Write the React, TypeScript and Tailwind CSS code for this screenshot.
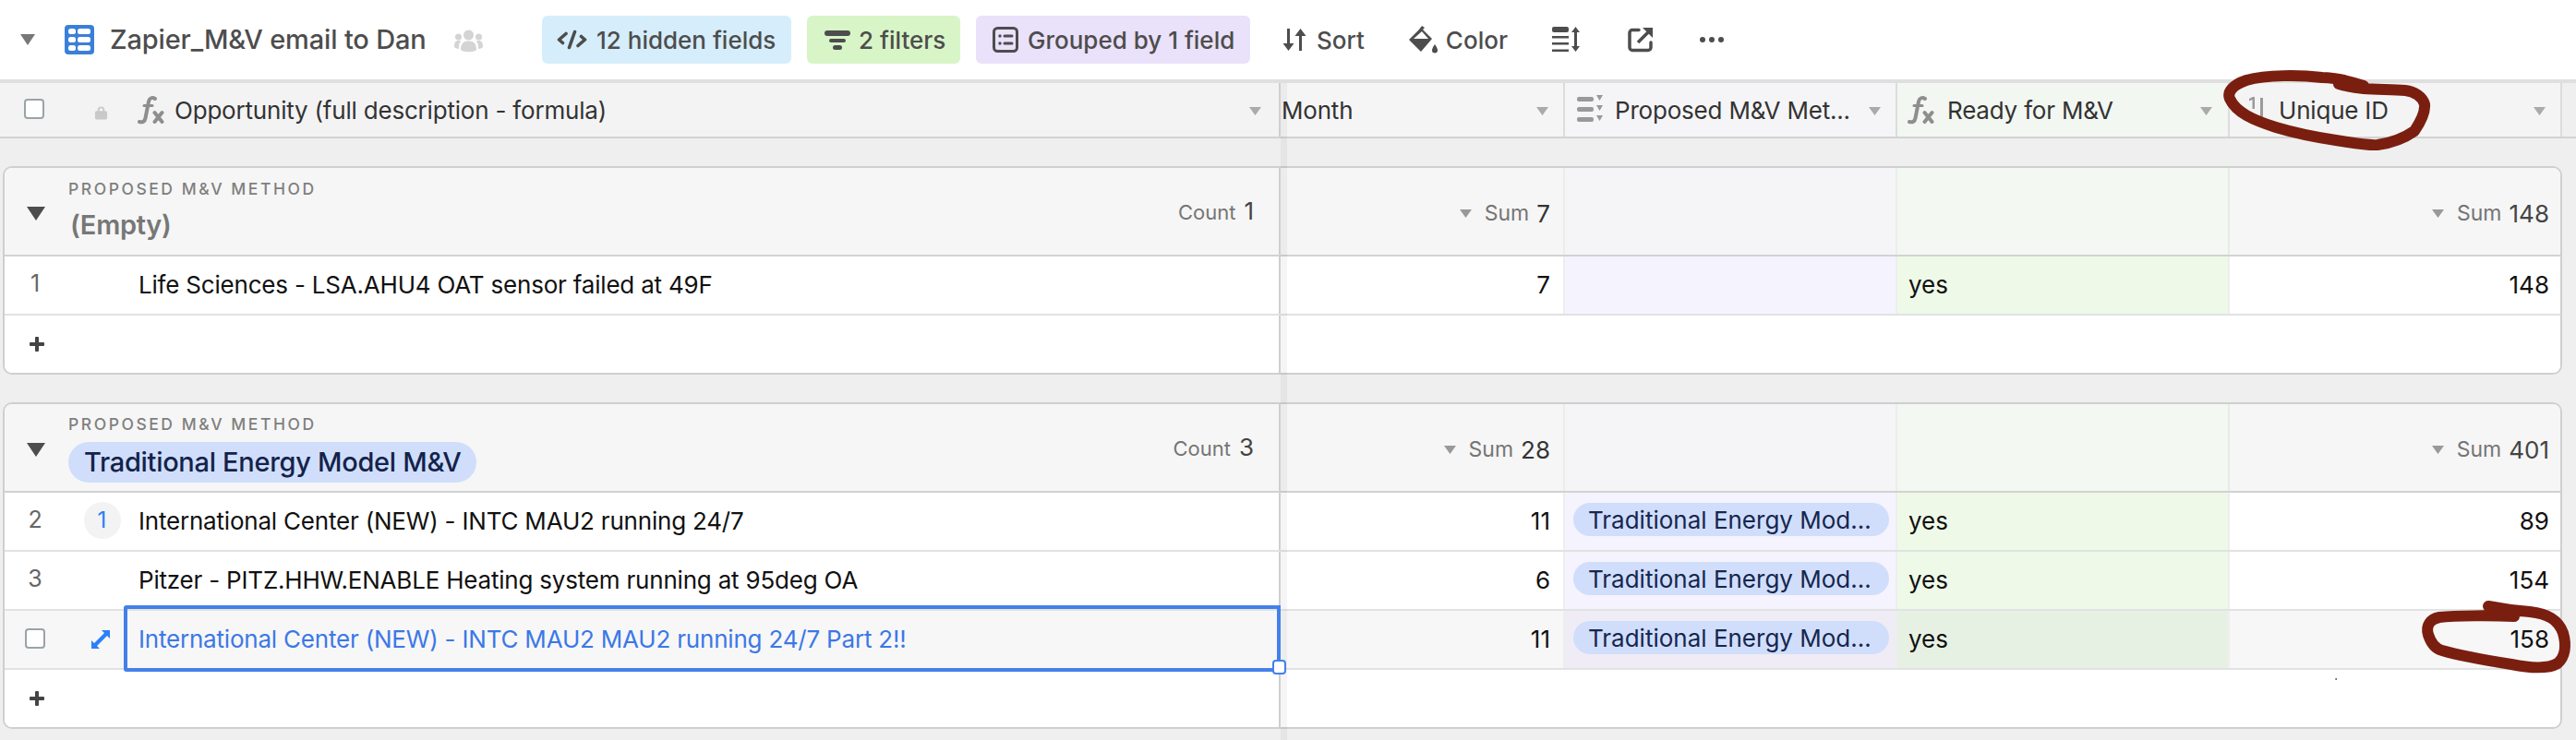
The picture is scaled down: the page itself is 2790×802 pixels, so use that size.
import React from "react";

const FONT = "[font-family:Inter,'Liberation_Sans',sans-serif]";

function Chev({ className = "" }: { className?: string }) {
  return (
    <svg width="13" height="9" viewBox="0 0 13 9" className={className}>
      <path d="M0 0h13L6.500 9z" fill="currentColor" />
    </svg>
  );
}

function Fx({ className = "" }: { className?: string }) {
  return (
    <svg width="29" height="32" viewBox="0 0 29 32" className={className}>
      <path d="M19 4c-3-2-6-1-7 3l-3.500 18c-.7 3.500-3 5-6.500 4" fill="none" stroke="currentColor" strokeWidth="4" strokeLinecap="round" />
      <path d="M7 11.500h9" stroke="currentColor" strokeWidth="3" strokeLinecap="round" />
      <path d="M18.500 19l8 10M26.500 19l-8 10" stroke="currentColor" strokeWidth="4" strokeLinecap="round" />
    </svg>
  );
}

function HeaderCell({ w, bg, icon, label, chevLeft }: { w: string; bg: string; icon?: React.ReactNode; label: string; chevLeft: string }) {
  return (
    <div className={`${w} ${bg} h-full relative flex items-center border-r-2 border-[#dcdcdc] shrink-0`}>
      {icon}
      <span className="text-[26px] tracking-[-0.2px] text-[#333] whitespace-nowrap">{label}</span>
      <Chev className={`absolute ${chevLeft} top-[26px] text-[#aaaaaa]`} />
    </div>
  );
}

function Toolbar() {
  return (
    <div className="h-[86px] bg-white flex items-center shrink-0 text-[#4d4d4d]">
      <svg width="16" height="12" viewBox="0 0 16 12" className="ml-[22px] text-[#777]"><path d="M0 0h16L8 12z" fill="currentColor" /></svg>
      <svg width="32" height="32" viewBox="0 0 32 32" className="ml-[32px]">
        <rect width="32" height="32" rx="4" fill="#3b80d8" />
        <g fill="#fff">
          <rect x="4" y="4" width="8" height="6" rx="2.500" /><rect x="14" y="4" width="14" height="6" rx="2.500" />
          <rect x="4" y="13" width="8" height="6" rx="2.500" /><rect x="14" y="13" width="14" height="6" rx="2.500" />
          <rect x="4" y="22" width="8" height="6" rx="2.500" /><rect x="14" y="22" width="14" height="6" rx="2.500" />
        </g>
      </svg>
      <span className="ml-[17px] text-[29px] tracking-[-0.15px] font-medium whitespace-nowrap w-[343px]">Zapier_M&amp;V email to Dan</span>
      <svg width="31" height="25" viewBox="0 0 31 25" className="ml-[30px] mt-[2px]" fill="#d4d4d4">
        <circle cx="15.500" cy="6" r="5.500" /><circle cx="4.500" cy="8" r="3.500" /><circle cx="26.500" cy="8" r="3.500" />
        <path d="M7 22c0-7 3-9.500 8.500-9.500S24 15 24 22c-3 3-14 3-17 0z" /><path d="M0 19c0-5 1-7 5-7 1 0 2 0 2 1-2 2-2 4-2 8-2 0-4-1-5-2zM31 19c0-5-1-7-5-7-1 0-2 0-2 1 2 2 2 4 2 8 2 0 4-1 5-2z" />
      </svg>
      <div className="ml-[64px] w-[270px] h-[52px] rounded-[6px] bg-[#d6eefb] flex items-center pl-[16px] text-[26px] font-medium whitespace-nowrap">
        <svg width="33" height="22" viewBox="0 0 33 22" className="mr-[10px]" fill="none" stroke="#4d4d4d" strokeWidth="3.600" strokeLinecap="round" strokeLinejoin="round">
          <path d="M10 4.500l-7.500 6.500 4 3.500M23 17.500l7.500-6.500-4-3.500M19.500 2.500L13.500 19.500" />
        </svg>
        12 hidden fields
      </div>
      <div className="ml-[17px] w-[166px] h-[52px] rounded-[6px] bg-[#d8f5c8] flex items-center pl-[19px] text-[26px] font-medium whitespace-nowrap">
        <svg width="28" height="21" viewBox="0 0 28 21" className="mr-[9px]" fill="#4d4d4d">
          <rect x="0" y="0" width="28" height="6" rx="3" /><rect x="5" y="9" width="18" height="4" rx="2" /><rect x="9" y="16" width="10" height="5" rx="2.500" />
        </svg>
        2 filters
      </div>
      <div className="ml-[17px] w-[297px] h-[52px] rounded-[6px] bg-[#eae1fa] flex items-center pl-[18px] text-[26px] font-medium whitespace-nowrap">
        <svg width="28" height="28" viewBox="0 0 28 28" className="mr-[10px]" fill="none" stroke="#4d4d4d">
          <rect x="1.500" y="1.500" width="25" height="25" rx="4" strokeWidth="3" />
          <circle cx="8" cy="10" r="1.700" fill="#4d4d4d" stroke="none" /><circle cx="8" cy="18" r="1.700" fill="#4d4d4d" stroke="none" />
          <path d="M13 10h8M13 18h8" strokeWidth="3" strokeLinecap="round" />
        </svg>
        Grouped by 1 field
      </div>
      <svg width="26" height="26" viewBox="0 0 26 26" className="ml-[35px]" fill="#4d4d4d">
        <path d="M5 1h3v16h4.500L6.500 25 .5 17H5zM18 9h-4.500l6-8 6 8H21v16h-3z" />
      </svg>
      <span className="ml-[11px] text-[26px] font-medium">Sort</span>
      <svg width="32" height="30" viewBox="0 0 32 30" className="ml-[47px]" fill="#4d4d4d">
        <path d="M15 0l3 2-2 2 10 10-12 14L1 15l11-11zM6 14h16l-7-8z" fillRule="evenodd" />
        <path d="M29 20c2 3 3 5 3 6.500a3 3 0 0 1-6 0c0-1.500 1-3.500 3-6.500z" />
      </svg>
      <span className="ml-[9px] text-[26px] font-medium">Color</span>
      <svg width="30" height="28" viewBox="0 0 30 28" className="ml-[48px]" fill="#4d4d4d">
        <rect x="0" y="0" width="18" height="6" rx="2" /><rect x="0" y="10" width="18" height="2.500" /><rect x="0" y="17" width="18" height="2.500" /><rect x="0" y="24.500" width="18" height="2.500" />
        <path d="M25.500 0l4.500 6h-3v15h3l-4.500 6-4.500-6h3V6h-3z" />
      </svg>
      <svg width="28" height="28" viewBox="0 0 28 28" className="ml-[52px]" fill="none" stroke="#4d4d4d" strokeWidth="3.500">
        <path d="M12 3.500H5a3 3 0 0 0-3 3v16a3 3 0 0 0 3 3h17a3 3 0 0 0 3-3V17" strokeLinecap="round" />
        <path d="M11 17L22 6" />
        <path d="M16 1h11v11z" fill="#4d4d4d" stroke="none" />
      </svg>
      <svg width="26" height="6" viewBox="0 0 26 6" className="ml-[50px]" fill="#4d4d4d">
        <circle cx="3" cy="3" r="3" /><circle cx="13" cy="3" r="3" /><circle cx="23" cy="3" r="3" />
      </svg>
    </div>
  );
}

function ColumnHeader() {
  return (
    <div className="h-[64px] shrink-0 border-t-4 border-b-2 border-t-[#dfdfdf] border-b-[#d2d2d2] flex">
      <div className="w-[1387px] h-full shrink-0 bg-[#f3f3f3] border-r-2 border-[#cfcfcf] relative flex items-center">
        <div className="ml-[26px] w-[22px] h-[22px] rounded-[4px] border-2 border-[#9aa3a8] bg-white mb-[2px]" />
        <svg width="15" height="16" viewBox="0 0 16 16" className="ml-[54px] mt-[6px]" fill="#c9c9c9">
          <rect x="1" y="6" width="14" height="10" rx="2" /><path d="M4 7V5a4 4 0 0 1 8 0v2h-2V5a2 2 0 0 0-4 0v2z" />
        </svg>
        <Fx className="ml-[32px] text-[#8e8e8e] shrink-0" />
        <span className="ml-[11px] text-[26px] tracking-[-0.2px] text-[#333] whitespace-nowrap">Opportunity (full description - formula)</span>
        <Chev className="absolute left-[1353px] top-[26px] text-[#aaaaaa]" />
      </div>
      <HeaderCell w="w-[308px]" bg="bg-[#f5f5f6]" label="Month" chevLeft="left-[277px]" icon={<span className="w-[1px]" />} />
      <HeaderCell
        w="w-[360px]"
        bg="bg-[#f5f5f7]"
        label="Proposed M&V Met..."
        chevLeft="left-[329px]"
        icon={
          <svg width="28" height="34" viewBox="0 0 28 34" className="ml-[13px] mr-[13px] shrink-0" fill="#999">
            <rect x="0" y="3" width="18" height="5" rx="2" /><rect x="0" y="14" width="18" height="5" rx="2" /><rect x="0" y="25" width="18" height="5" rx="2" />
            <path d="M21 1h7l-3.500 6zM21 12h7l-3.500 6zM21 23h7l-3.500 6z" />
          </svg>
        }
      />
      <HeaderCell
        w="w-[360px]"
        bg="bg-[#f2f7f1]"
        label="Ready for M&V"
        chevLeft="left-[328px]"
        icon={<Fx className="ml-[11px] mr-[14px] text-[#8e8e8e] shrink-0" />}
      />
      <HeaderCell
        w="w-[360px]"
        bg="bg-[#f4f4f4]"
        label="Unique ID"
        chevLeft="left-[329px]"
        icon={
          <svg width="20" height="32" viewBox="0 0 20 32" className="ml-[18px] mr-[15px] shrink-0" fill="#9a9a9a">
            <path d="M3 4l4-2h2v13H6.500V5L3 6.500z" /><rect x="3" y="22" width="7" height="6" rx="1" /><rect x="15" y="3" width="3" height="28" />
          </svg>
        }
      />
    </div>
  );
}

type Row = { n: number; title: string; month: number; method?: boolean; uid: number; badge?: boolean; selected?: boolean };

function DataRow({ r }: { r: Row }) {
  const s = r.selected;
  return (
    <div className={`h-[64px] flex border-b-2 border-[#e0e2e3] ${s ? "bg-[#f7f7f7]" : "bg-white"}`}>
      <div className="w-[1380px] shrink-0 flex items-center relative bg-inherit">
        <div className="w-[62px] shrink-0 flex justify-center pl-[4px] mb-[2px]">
          {s ? <div className="w-[22px] h-[22px] rounded-[4px] border-2 border-[#9aa3a8] bg-white" /> : <span className="text-[25px] text-[#666]">{r.n}</span>}
        </div>
        <div className="w-[83px] shrink-0 flex justify-center pl-[4px]">
          {r.badge && <div className="w-[40px] h-[40px] rounded-full bg-[#f3f3f3] flex items-center justify-center text-[24px] text-[#2d7ff9] mb-[2px]">1</div>}
          {s && (
            <svg width="20" height="20" viewBox="0 0 20 20" className="ml-[-3px]" fill="#2d7ff9">
              <path d="M20 0v9l-3-3L6 17l3 3H0v-9l3 3L14 3l-3-3z" />
            </svg>
          )}
        </div>
        <span className={`text-[26px] tracking-[-0.2px] whitespace-nowrap mb-[2px] ${s ? "text-[#3b78e7]" : "text-[#111]"}`}>{r.title}</span>
        {s && (
          <div className="absolute left-[129px] right-[-2px] top-[-6px] bottom-[-4px] border-[4px] border-[#4480ea] rounded-l-[3px] z-10 pointer-events-none">
            <div className="absolute right-[-10px] bottom-[-7px] w-[15px] h-[16px] rounded-[4px] border-2 border-[#4480ea] bg-white" />
          </div>
        )}
      </div>
      <div className="w-[2px] shrink-0 bg-[#cfcfcf]" />
      <div className="w-[308px] shrink-0 flex items-center justify-end pr-[14px] text-[26px] text-[#111] border-r-2 border-[#eeeeee] pb-[2px]">{r.month}</div>
      <div className={`w-[360px] shrink-0 flex items-center pl-[9px] border-r-2 border-[#eeeeee] ${s ? "bg-[#efecf6]" : "bg-[#f5f3fd]"}`}>
        {r.method && (
          <div className="w-[342px] h-[36px] rounded-[18px] bg-[#d0defc] flex items-center pl-[16px] text-[26px] text-[#17264d] whitespace-nowrap mb-[4px]">
            Traditional Energy Mod...
          </div>
        )}
      </div>
      <div className={`w-[360px] shrink-0 flex items-center pl-[12px] pb-[2px] text-[26px] text-[#111] border-r-2 border-[#eeeeee] ${s ? "bg-[#e7f1e3]" : "bg-[#eef9e8]"}`}>yes</div>
      <div className="flex-1 flex items-center justify-end pr-[12px] pb-[2px] text-[26px] text-[#111]">{r.uid}</div>
    </div>
  );
}

function Group({ count, month, uid, rows, pill }: { count: number; month: number; uid: number; rows: Row[]; pill?: string }) {
  return (
    <div className="ml-[3px] w-[2772px] rounded-[10px] border-2 border-[#cfcfcf] bg-white overflow-visible">
      <div className="h-[96px] flex border-b-2 border-[#d2d2d2] bg-[#f6f6f6] rounded-t-[8px]">
        <div className="w-[1380px] shrink-0 flex items-center relative">
          <svg width="20" height="15" viewBox="0 0 20 15" className="ml-[24px] mt-[4px] shrink-0"><path d="M0 0h20L10 15z" fill="#4d4d4d" /></svg>
          <div className="ml-[25px] flex flex-col items-start">
            <span className="text-[17.500px] font-medium tracking-[2.550px] text-[#7f7f7f] leading-[24px] whitespace-nowrap">PROPOSED M&amp;V METHOD</span>
            {pill ? (
              <span className="mt-[7px] h-[44px] rounded-[22px] bg-[#d0defc] px-[17px] flex items-center text-[29px] tracking-[-0.3px] font-medium text-[#13234a] whitespace-nowrap">{pill}</span>
            ) : (
              <span className="mt-[5px] ml-[2px] h-[44px] flex items-center text-[29px] font-semibold tracking-[-0.3px] text-[#777] whitespace-nowrap">(Empty)</span>
            )}
          </div>
          <div className="absolute right-[27px] top-[27px] flex items-baseline gap-[9px]">
            <span className="text-[22px] text-[#757575]">Count</span>
            <span className="text-[26px] text-[#444]">{count}</span>
          </div>
        </div>
        <div className="w-[2px] shrink-0 bg-[#cfcfcf]" />
        <div className="w-[308px] shrink-0 flex items-center justify-end pr-[14px] border-r-2 border-[#ececec] pt-[4px]">
          <Chev className="text-[#999] mr-[14px]" />
          <span className="text-[23px] text-[#757575] mr-[8px]">Sum</span>
          <span className="text-[26px] text-[#333]">{month}</span>
        </div>
        <div className="w-[360px] shrink-0 bg-[#f5f5f7] border-r-2 border-[#ececec]" />
        <div className="w-[360px] shrink-0 bg-[#f3f8f2] border-r-2 border-[#e6ebe5]" />
        <div className="flex-1 flex items-center justify-end pr-[12px] pt-[4px]">
          <Chev className="text-[#999] mr-[14px]" />
          <span className="text-[23px] text-[#757575] mr-[8px]">Sum</span>
          <span className="text-[26px] text-[#444]">{uid}</span>
        </div>
      </div>
      {rows.map((r) => (
        <DataRow key={r.n} r={r} />
      ))}
      <div className="h-[62px] flex rounded-b-[8px] bg-white">
        <div className="w-[1380px] shrink-0 flex items-center">
          <svg width="16" height="16" viewBox="0 0 16 16" className="ml-[27px]" fill="#444">
            <rect x="6" y="0" width="4" height="16" rx="1" /><rect x="0" y="6" width="16" height="4" rx="1" />
          </svg>
        </div>
        <div className="w-[2px] shrink-0 bg-[#cfcfcf]" />
      </div>
    </div>
  );
}

export default function App() {
  return (
    <div className={`${FONT} w-[2790px] h-[802px] bg-[#efefef] relative overflow-hidden flex flex-col`}>
      <Toolbar />
      <ColumnHeader />
      <div className="mt-[30px] flex flex-col gap-[30px]">
        <Group
          count={1}
          month={7}
          uid={148}
          rows={[{ n: 1, title: "Life Sciences - LSA.AHU4 OAT sensor failed at 49F", month: 7, uid: 148 }]}
        />
        <Group
          count={3}
          month={28}
          uid={401}
          pill="Traditional Energy Model M&V"
          rows={[
            { n: 2, title: "International Center (NEW) - INTC MAU2 running 24/7", month: 11, method: true, uid: 89, badge: true },
            { n: 3, title: "Pitzer - PITZ.HHW.ENABLE Heating system running at 95deg OA", month: 6, method: true, uid: 154 },
            { n: 4, title: "International Center (NEW) - INTC MAU2 MAU2 running 24/7 Part 2!!", month: 11, method: true, uid: 158, selected: true },
          ]}
        />
      </div>
      <div className="absolute left-[1387px] top-[90px] bottom-0 w-[7px] bg-black/[0.04] pointer-events-none" />
      <svg width="2790" height="802" viewBox="0 0 2790 802" className="absolute left-0 top-0 pointer-events-none z-20" fill="none" stroke="#7a1f10" strokeWidth="12" strokeLinecap="round" strokeLinejoin="round">
        <path d="M2560 93C2545 88 2530 84 2515 84C2490 81 2455 81 2433 87C2418 92 2412 100 2415 107C2422 122 2440 130 2465 138C2485 144 2510 149 2530 152C2550 155 2565 158 2575 157C2590 155 2605 149 2615 142C2621 133 2627 122 2626 113C2624 105 2615 99 2605 98C2590 97 2575 97 2560 96C2550 95 2540 93 2533 91" />
        <path d="M2723 668C2700 667 2660 667 2642 669C2632 671 2627 678 2630 688C2633 697 2637 703 2645 705C2665 711 2695 716 2720 720C2740 724 2760 725 2770 719C2778 712 2780 700 2776 686C2771 672 2760 665 2740 663C2725 662 2710 660 2695 657" />
        <circle cx="2530" cy="736" r="0.350" strokeWidth="1" />
      </svg>
    </div>
  );
}
